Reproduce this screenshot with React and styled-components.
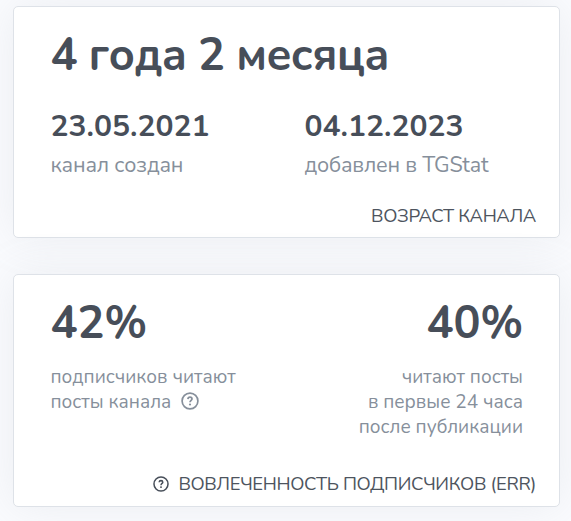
import styled, { createGlobalStyle } from "styled-components";

const App = () => {
  return (
    <>
      <GlobalStyle />
      <Page>
        <Card $height={232} $bottom={8}>
          <Value $spacing="-0.57px">4 года 2 месяца</Value>
          <Dates>
            <div>
              <DateValue>23.05.2021</DateValue>
              <DateLabel>канал создан</DateLabel>
            </div>
            <div>
              <DateValue>04.12.2023</DateValue>
              <DateLabel>добавлен в TGStat</DateLabel>
            </div>
          </Dates>
          <Footer>
            <Title>ВОЗРАСТ КАНАЛА</Title>
          </Footer>
        </Card>
        <Card $height={233} $bottom={9}>
          <Rates>
            <div>
              <Value>42%</Value>
              <Note>
                <span>подписчиков читают</span>
                <NoteRow>
                  <span>посты канала</span>
                  <HelpIcon size={18} lift={4} />
                </NoteRow>
              </Note>
            </div>
            <Right>
              <Value>40%</Value>
              <Note>
                <span>читают посты</span>
                <span>в первые 24 часа</span>
                <span>после публикации</span>
              </Note>
            </Right>
          </Rates>
          <Footer>
            <HelpIcon size={16} lift={2} />
            <Title>ВОВЛЕЧЕННОСТЬ ПОДПИСЧИКОВ (ERR)</Title>
          </Footer>
        </Card>
      </Page>
    </>
  );
};

const HelpIcon = ({ size, lift }) => (
  <Icon
    $lift={lift}
    width={size}
    height={size}
    viewBox="0 0 18 18"
    fill="none"
    stroke="currentColor"
    strokeLinejoin="round"
  >
    <circle cx="9" cy="9" r="7.9" strokeWidth="1.7" />
    <path
      d="M6.9 7.1C7 5.8 7.9 5.2 9 5.2C10.2 5.2 11 5.9 11 6.9C11 8.3 9 8.4 9 10.3"
      strokeWidth="1.7"
    />
    <circle cx="9" cy="12.5" r="1.1" fill="currentColor" stroke="none" />
  </Icon>
);

const GlobalStyle = createGlobalStyle`
  * {
    box-sizing: border-box;
  }

  body {
    margin: 0;
    background: #fafbfe;
    color: #474e59;
    font-family: Nunito, Lato, "Open Sans", sans-serif;
    overflow: hidden;
  }
`;

const Page = styled.main`
  display: flex;
  flex-direction: column;
  gap: 36px;
  height: 521px;
  padding: 6px 11px 0 13px;
`;

const Card = styled.section`
  display: flex;
  flex-direction: column;
  flex: none;
  height: ${({ $height }) => $height}px;
  padding: 21px 23px ${({ $bottom }) => $bottom}px 36.5px;
  background: #fff;
  border: 1px solid #dee2e8;
  border-radius: 5px;
  box-shadow: 0 0 44px rgba(154, 161, 171, 0.15);
`;

const Value = styled.div`
  font-size: 45px;
  font-weight: 700;
  line-height: 56px;
  letter-spacing: ${({ $spacing }) => $spacing || "0"};
  white-space: nowrap;
`;

const Dates = styled.div`
  display: grid;
  grid-template-columns: 254px 1fr;
  margin-top: 24px;
`;

const DateValue = styled.div`
  font-size: 30px;
  font-weight: 700;
  line-height: 38px;
`;

const DateLabel = styled.div`
  font-size: 21.5px;
  line-height: 30px;
  letter-spacing: -0.2px;
  margin-top: 4px;
  color: #868f9b;
  white-space: nowrap;
`;

const Rates = styled.div`
  display: flex;
  justify-content: space-between;
  padding-right: 13px;
`;

const Note = styled.div`
  display: flex;
  flex-direction: column;
  margin-top: 13px;
  font-size: 19px;
  line-height: 25px;
  color: #868f9b;
`;

const NoteRow = styled.div`
  display: flex;
  align-items: center;
  gap: 10px;
`;

const Icon = styled.svg`
  flex: none;
  margin-bottom: ${({ $lift }) => $lift}px;
`;

const Right = styled.div`
  text-align: right;
`;

const Footer = styled.div`
  display: flex;
  align-items: center;
  justify-content: flex-end;
  gap: 9px;
  margin-top: auto;
`;

const Title = styled.span`
  font-size: 18.5px;
  line-height: 25px;
  letter-spacing: -0.35px;
  color: #4d545e;
  white-space: nowrap;
`;

export default App;
